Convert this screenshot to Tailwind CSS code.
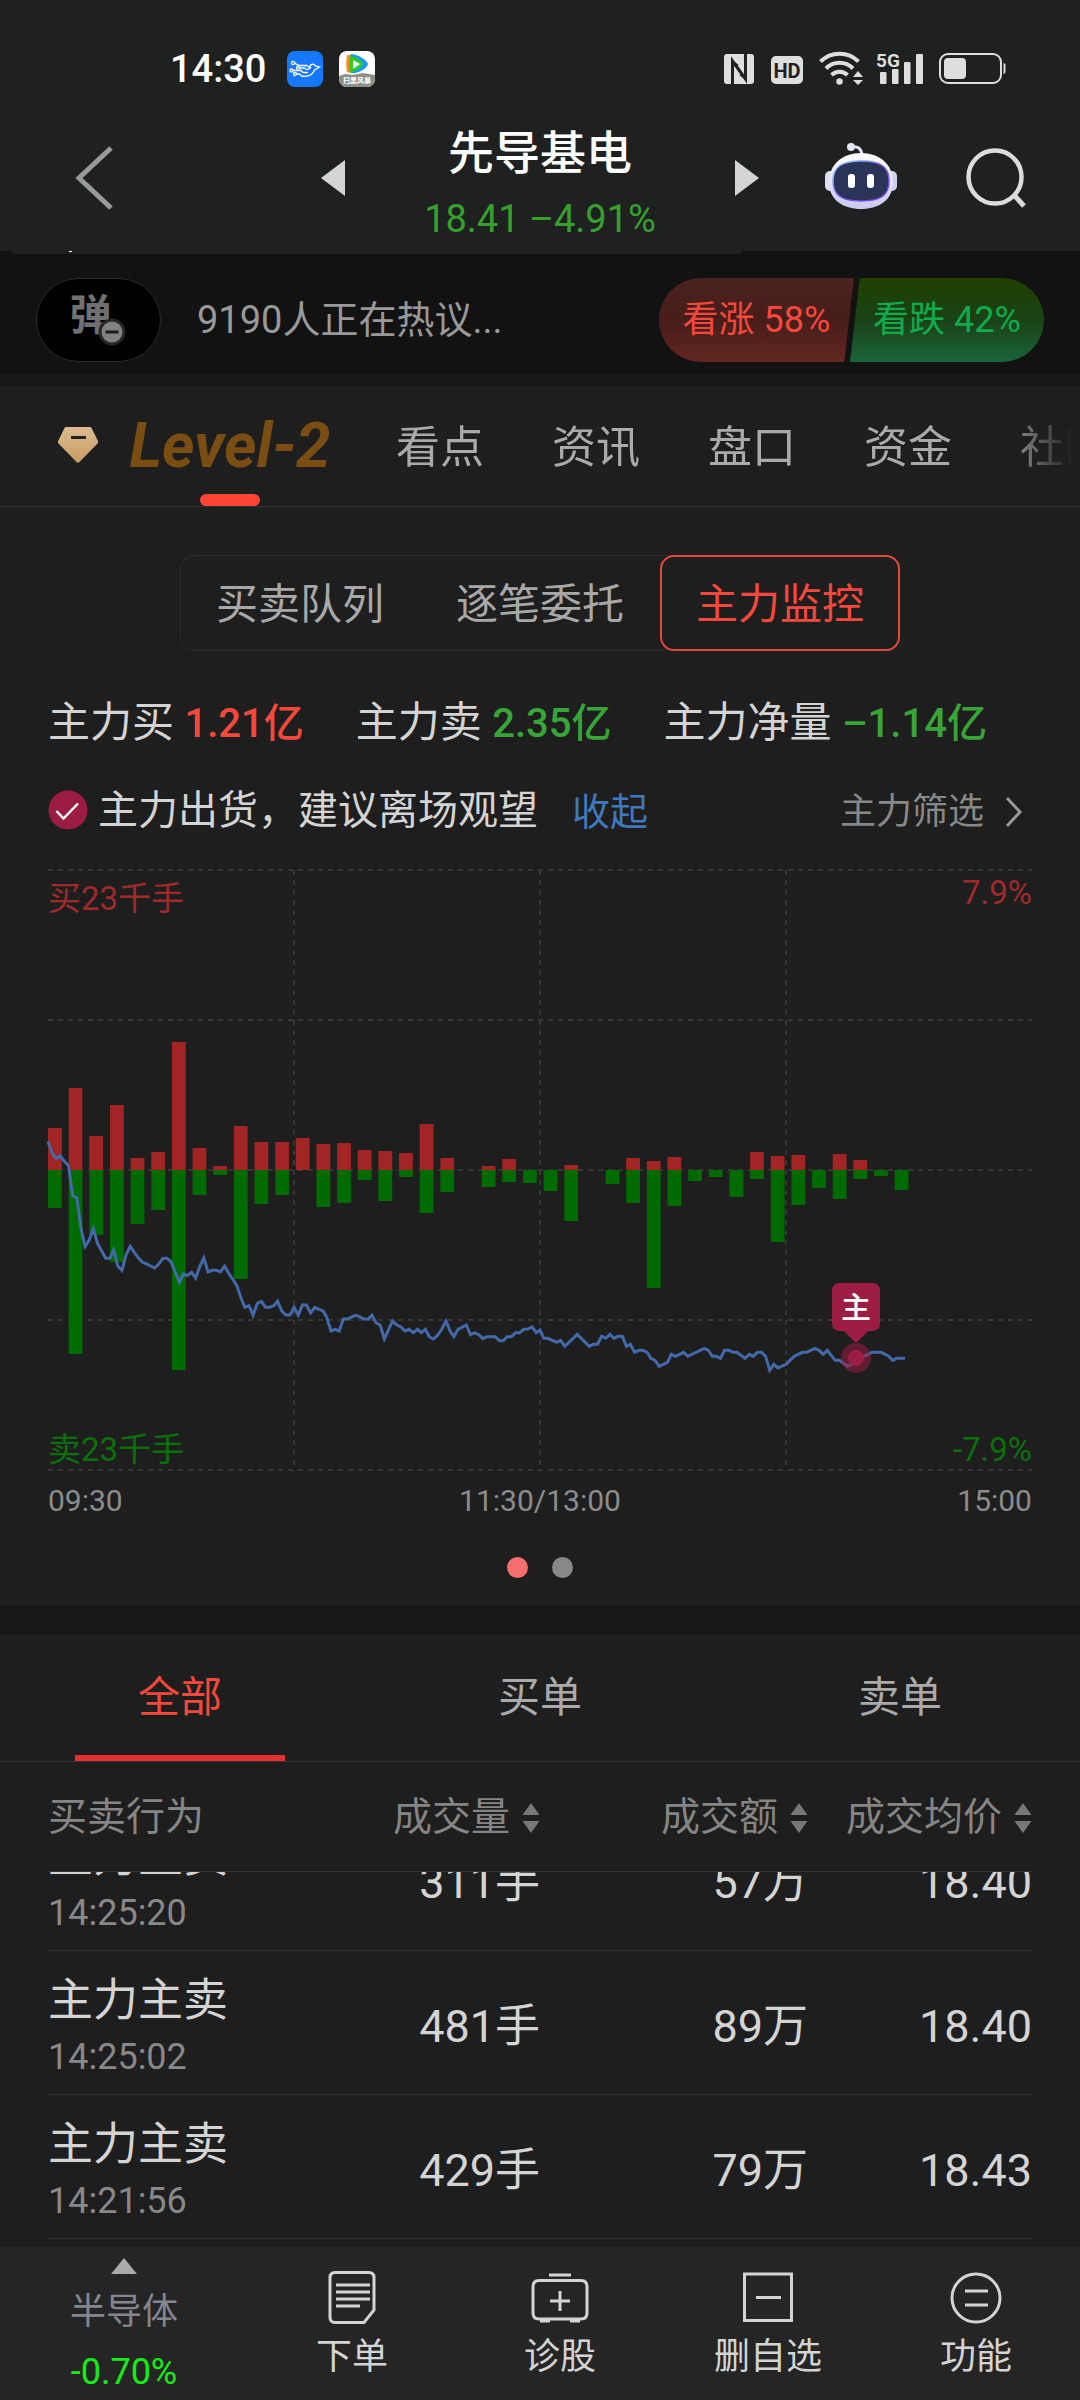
<!DOCTYPE html>
<html lang="zh-CN">
<head>
<meta charset="utf-8">
<meta name="viewport" content="width=device-width, initial-scale=1">
<title>先导基电</title>
<script src="https://cdn.jsdelivr.net/npm/@tailwindcss/browser@4"></script>
</head>
<body class="min-h-screen bg-[#1e1e1e] font-['Roboto','Noto_Sans_CJK_SC',sans-serif] leading-none text-[#d4d4d4]">
<div class="flex min-h-screen flex-col">

  <!-- Status bar and title -->
  <header class="flex h-[251px] flex-col bg-[#1f2121]">
    <div class="mt-11 flex h-[50px] items-center justify-between pr-[74px] pl-[170px]">
      <div class="flex items-center">
        <span class="w-[117px] text-[38px] font-medium text-white">14:30</span>
        <svg class="size-9" viewBox="0 0 36 36"><rect width="36" height="36" rx="8" fill="#1677ff"/><g fill="none" stroke="#fff" stroke-width="1.3"><circle cx="6" cy="12" r="1.6"/><circle cx="4.500" cy="19.500" r="1.500"/><circle cx="8" cy="23" r="1.500"/><circle cx="11" cy="17" r="1.500"/><path d="M7.600 12l4 2.500h8l3 2M12.500 17h6M6 19.500h8l2 2h5M9.500 23h3l2 2c6 1 11-1 13-6l5-3-4-1c-2-3-5-2-6 1M18 18c2 1 5 0 6-2"/></g></svg>
        <svg class="ml-4 size-9" viewBox="0 0 36 36"><defs><clipPath id="appClip"><rect width="36" height="36" rx="8"/></clipPath></defs><g clip-path="url(#appClip)"><rect width="36" height="36" fill="#fff"/><path d="M0 25l6-2 8 1 10-2 12 2v12H0z" fill="#8c8f86"/><path d="M8 4c-1 5-1 13 0 17l4 1V4z" fill="#ff8a1f"/><path d="M12 3c6 0 16 6 17 10-1 5-11 10-17 9-2-4-2-14 0-19z" fill="#1b9af7"/><path d="M11 5c5 0 12 5 13 8-1 3-8 8-13 8-1-4-1-12 0-16z" fill="#2ecc1e"/><path d="M14 9l7 4-7 5z" fill="#fff"/><text x="18" y="32" text-anchor="middle" font-size="7" font-weight="700" fill="#fff">扫黑风暴</text></g></svg>
      </div>
      <svg class="h-[36px] w-[282px]" viewBox="0 0 282 36" fill="#dedede">
        <rect y="3" width="30" height="30" rx="3"/>
        <path d="M8.500 33V10l13 18V3M8.500 11l5 4M21.500 27l-5-4" fill="none" stroke="#1f2121" stroke-width="3"/>
        <rect x="47" y="5" width="32" height="28" rx="5"/>
        <text x="63" y="26.500" text-anchor="middle" font-size="20" font-weight="700" fill="#1f2121">HD</text>
        <g fill="none" stroke="#dedede" stroke-width="4"><path d="M96.500 10.500a27 27 0 0 1 38 0M102 17.500a19 19 0 0 1 27 0M107.500 24a11.500 11.500 0 0 1 16 0"/></g>
        <circle cx="115.500" cy="30.500" r="3.200"/>
        <path d="M134 20l5 6h-10zM134 34l5-5h-10z"/>
        <text x="152" y="16" font-size="19" font-weight="700">5G</text>
        <rect x="156" y="21" width="6.500" height="12" rx="1"/><rect x="168" y="18" width="6.500" height="15" rx="1"/><rect x="180" y="11" width="6.500" height="22" rx="1"/><rect x="192" y="3" width="7" height="30" rx="1"/>
        <rect x="216" y="3" width="61" height="29" rx="8" fill="none" stroke="#dedede" stroke-width="2"/>
        <rect x="220" y="7" width="22" height="21" rx="4"/><path d="M279.500 12q2 .5 2 2v7q0 1.500-2 2z"/>
      </svg>
    </div>
    <div class="mt-2.5 grid h-[147px] grid-cols-[1fr_438px_1fr] items-center">
      <button class="pl-[74px]" aria-label="返回"><svg class="h-[66px] w-10" viewBox="0 0 40 66"><path d="M37 3L5 33l32 30" fill="none" stroke="#999" stroke-width="5"/></svg></button>
      <div class="flex items-center justify-between">
        <button aria-label="上一只"><svg class="h-9 w-6" viewBox="0 0 24 36"><path d="M24 0v36L0 18z" fill="#d4d4d4"/></svg></button>
        <div class="flex flex-col items-center gap-6 pt-3">
          <h1 class="text-[46px] font-medium text-white">先导基电</h1>
          <p class="text-[38px] text-[#37a02d]">18.41 –4.91%</p>
        </div>
        <button aria-label="下一只"><svg class="h-9 w-6" viewBox="0 0 24 36"><path d="M0 0v36l24-18z" fill="#d4d4d4"/></svg></button>
      </div>
      <div class="flex items-center justify-between pr-[54px] pl-[66px]">
        <button class="pb-1" aria-label="智能助手">
          <svg class="h-[66px] w-[72px]" viewBox="0 0 72 66">
            <defs><linearGradient id="head" x1="0" y1="0" x2="0" y2="1"><stop offset="0" stop-color="#fff"/><stop offset="1" stop-color="#c9c8f0"/></linearGradient><linearGradient id="rim" x1="0" y1="0" x2="1" y2="1"><stop offset="0" stop-color="#8fe6ff"/><stop offset=".5" stop-color="#7a5af0"/><stop offset="1" stop-color="#7b3fe0"/></linearGradient></defs>
            <path d="M26 4q10-2 11 8" fill="none" stroke="#e6e4fa" stroke-width="3"/><circle cx="26" cy="4" r="4" fill="#e6e6fb"/>
            <rect y="28" width="12" height="20" rx="5" fill="#dfe0f6"/><rect x="60" y="28" width="12" height="20" rx="5" fill="#cfcff0"/>
            <path d="M36 10c18 0 32 11 32 29S54 66 36 66 4 57 4 39 18 10 36 10z" fill="url(#head)"/>
            <path d="M36 18c20 0 28 6 28 20S56 58 36 58 8 52 8 38s8-20 28-20z" fill="#2a3358" stroke="url(#rim)" stroke-width="1.500"/>
            <rect x="23" y="31" width="7" height="14" rx="3" fill="#fff"/><rect x="42" y="31" width="7" height="14" rx="3" fill="#fff"/>
          </svg>
        </button>
        <button aria-label="搜索"><svg class="size-[60px]" viewBox="0 0 60 60"><circle cx="29" cy="29" r="26.500" fill="none" stroke="#dcdcdc" stroke-width="4.500"/><path d="M48 47l10 11" stroke="#dcdcdc" stroke-width="5"/></svg></button>
      </div>
    </div>
  </header>
  <div class="flex h-[3px] bg-[#121212] px-3"><div class="w-[69%] bg-[#1f2121] pl-[57px]"><div class="h-px w-[3px] bg-white"></div></div></div>

  <!-- Discussion bar -->
  <section class="flex h-[120px] items-center bg-[#121212] px-9 pt-3">
    <button class="relative flex h-[84px] w-[125px] items-center justify-center rounded-full border border-[#2a2a2a] bg-black pr-4 pb-2 text-[42px] font-bold text-[#707070]" aria-label="弹幕">弹
      <svg class="absolute top-[39px] left-[61px] size-7" viewBox="0 0 28 28"><circle cx="14" cy="14" r="12" fill="#828282" stroke="#262626" stroke-width="3"/><path d="M7.500 14h13" stroke="#1c1c1c" stroke-width="3"/></svg>
    </button>
    <a href="#" class="ml-9 text-[38px] text-[#999]">9190人正在热议...</a>
    <div class="ml-auto flex h-[84px] overflow-hidden rounded-full text-[36px]">
      <button class="w-[195px] bg-linear-to-b from-[#4a221f] via-[#471d1a] to-[#632620] text-[#f4483c] [clip-path:polygon(0_0,100%_0,95%_100%,0_100%)]">看涨 58%</button>
      <button class="-ml-1 w-[194px] bg-linear-to-b from-[#204000] via-[#1a4216] to-[#19653a] text-[#10ab4c] [clip-path:polygon(5%_0,100%_0,100%_100%,0_100%)]">看跌 42%</button>
    </div>
  </section>
  <div class="h-3 bg-[#181818]"></div>

  <!-- Section tabs -->
  <nav class="flex h-[121px] items-center border-b border-[#333] pl-[58px] text-[44px] whitespace-nowrap text-[#aaa]">
    <svg class="mb-0.5 h-9 w-10 shrink-0" viewBox="0 0 40 36"><defs><linearGradient id="gem" x1="0" y1="0" x2="0" y2="1"><stop offset="0" stop-color="#dcbc92"/><stop offset="1" stop-color="#c89c62"/></linearGradient></defs><path d="M8 0h24q1 0 1.500 1L40 14q.5 1.500-.5 2.500L21.500 35q-1.500 1.500-3 0L.5 16.500q-1-1-.3-2.500L6.500 1Q7 0 8 0z" fill="url(#gem)"/><path d="M13 10.500h15" stroke="#222" stroke-width="3"/></svg>
    <a href="#" aria-current="page" class="relative ml-8 flex h-full w-[200px] shrink-0 items-center justify-center text-[62px] font-bold text-[#7a4d12] italic">Level-2<span class="absolute bottom-0 left-1/2 h-3 w-[60px] -translate-x-1/2 rounded-md bg-[#ff4433]"></span></a>
    <div class="ml-[66px] flex h-full min-w-0 flex-1 items-center gap-[68px] overflow-x-auto pt-1 [mask-image:linear-gradient(to_right,black_88%,transparent_99%)] [scrollbar-width:none]"><a href="#">看点</a><a href="#">资讯</a><a href="#">盘口</a><a href="#">资金</a><a href="#">社区</a></div>
  </nav>

  <!-- Main force monitor -->
  <section class="flex flex-col px-12">
    <div class="mt-12 flex h-24 self-center rounded-[14px] text-[42px] text-[#a8a8a8] ring-1 ring-[#2a2a2a] ring-inset">
      <button class="w-60 pt-1">买卖队列</button><button class="w-60 pt-1">逐笔委托</button><button class="w-60 rounded-[14px] border-2 border-[#e04a3c] pt-1 text-[#f4483c]">主力监控</button>
    </div>
    <div class="mt-12 flex h-12 items-center gap-[52px] text-[42px] whitespace-nowrap">
      <p>主力买 <span class="text-[40px] font-medium text-[#f4483c]">1.21亿</span></p>
      <p>主力卖 <span class="text-[40px] font-medium text-[#37a537]">2.35亿</span></p>
      <p>主力净量 <span class="text-[40px] font-medium text-[#37a537]">–1.14亿</span></p>
    </div>
    <div class="mt-[38px] flex h-[50px] items-center">
      <svg class="size-10" viewBox="0 0 40 40"><circle cx="20" cy="20" r="19.500" fill="#9b1d43"/><path d="M8.500 21l7 7.500L30 13.500" fill="none" stroke="#fff" stroke-width="2.500"/></svg>
      <p class="ml-2.5 pt-0.5 text-[40px]">主力出货，建议离场观望</p>
      <button class="ml-[34px] pt-1 text-[38px] text-[#4078bd]">收起</button>
      <button class="ml-auto flex items-center gap-5 pt-1 pr-2 text-[36px] text-[#888]">主力筛选<svg class="h-8 w-5" viewBox="0 0 20 32"><path d="M3 2l13 14L3 30" fill="none" stroke="#999" stroke-width="3"/></svg></button>
    </div>
    <svg class="mt-[35px] w-full overflow-visible" viewBox="0 0 984 600" role="img" aria-label="主力买卖走势图">
      <path d="M0 0h984M0 150h984M0 300h984M0 450h984M0 600h984M246 0v600M492 0v600M738 0v600" fill="none" stroke="#353535" stroke-width="2" stroke-dasharray="5 5"/>
      <g id="bars"></g>
      <g font-size="33"><g fill="#a02a2a"><text x="0" y="40">买23千手</text><text x="984" y="34" text-anchor="end">7.9%</text></g><g fill="#0b700b"><text x="0" y="591">卖23千手</text><text x="984" y="591" text-anchor="end">-7.9%</text></g></g>
      <polyline transform="translate(-48 260) scale(.3444 .3333)" vector-effect="non-scaling-stroke" fill="none" stroke="#4369a8" stroke-width="3" points="139,34 151,68 163,86 175,78 187,94 199,107 211,197 223,203 235,295 247,350 259,330 271,296 283,340 295,362 307,385 319,385 330,360 342,408 354,421 366,375 378,349 390,367 402,384 414,397 426,402 437,408 449,414 461,402 473,385 485,385 497,396 509,427 521,456 532,432 544,437 556,427 568,444 580,410 592,384 604,426 616,421 628,421 640,426 652,408 664,430 676,448 688,468 700,505 711,532 723,527 735,556 747,520 759,514 771,532 783,532 795,527 806,514 818,543 830,555 842,555 854,532 866,555 878,525 890,525 902,549 914,532 926,538 938,543 948,560 961,603 973,598 985,603 997,567 1009,567 1021,561 1033,556 1045,561 1057,567 1069,567 1080,556 1092,579 1104,585 1116,627 1128,600 1140,573 1152,585 1164,591 1176,603 1188,598 1200,608 1212,598 1223,608 1235,598 1247,621 1259,627 1271,615 1283,597 1295,573 1307,603 1318,620 1330,598 1354,585 1366,614 1378,608 1390,614 1402,626 1414,620 1438,620 1450,632 1461,632 1473,620 1485,620 1497,608 1509,608 1521,598 1533,597 1545,591 1557,608 1568,600 1579,625 1591,625 1616,637 1628,631 1640,649 1676,613 1711,649 1723,643 1735,643 1747,619 1759,625 1771,613 1783,625 1795,619 1807,619 1819,649 1830,643 1843,667 1855,661 1867,661 1879,667 1890,685 1902,691 1914,709 1938,697 1949,673 1961,679 1985,667 1997,679 2045,655 2057,661 2068,679 2080,679 2092,685 2104,661 2116,661 2128,667 2140,667 2163,685 2176,673 2187,679 2199,667 2211,667 2223,679 2235,721 2247,703 2259,714 2282,703 2306,679 2330,667 2342,667 2366,655 2378,661 2390,673 2402,661 2425,691 2437,691 2461,709 2473,703 2485,690 2508,679 2532,667 2558,667 2580,678 2592,691 2604,685 2628,685"/>
      <g fill="#9b1d43"><circle cx="808" cy="488" r="15" opacity=".55"/><circle cx="808" cy="488" r="8"/><path d="M792 413h32q8 0 8 8v32q0 8-8 8h-4l-12 12-12-12h-4q-8 0-8-8v-32q0-8 8-8z"/></g>
      <text x="808" y="448" text-anchor="middle" font-size="30" font-weight="500" fill="#fff">主</text>
    </svg>
    <div class="mt-4 flex justify-between text-[30px] text-[#8c8c8c]"><span>09:30</span><span>11:30/13:00</span><span>15:00</span></div>
    <div class="mt-[41px] mb-[27px] flex justify-center gap-6"><span class="size-[21px] rounded-full bg-[#f56f6f]"></span><span class="size-[21px] rounded-full bg-[#888]"></span></div>
  </section>
  <div class="h-[30px] bg-[#171717]"></div>

  <!-- Order list -->
  <div class="grid h-[127px] grid-cols-3 border-b border-[#333] text-[42px] text-[#aaa]">
    <button class="relative text-[#f4483c]">全部<span class="absolute bottom-0 left-1/2 h-[6px] w-[210px] -translate-x-1/2 bg-[#e33030]"></span></button>
    <button>买单</button><button>卖单</button>
  </div>
  <div class="flex h-[485px] flex-col-reverse overflow-y-auto px-12 pb-2 [scrollbar-width:none]">
    <table class="w-full shrink-0 table-fixed border-separate border-spacing-0 text-right text-[45px]">
      <colgroup><col class="w-1/4"><col class="w-1/4"><col><col class="w-[224px]"></colgroup>
      <thead class="text-[39px] whitespace-nowrap text-[#858585] [&_th]:sticky [&_th]:top-0 [&_th]:h-[110px] [&_th]:border-b [&_th]:border-[#333] [&_th]:bg-[#1e1e1e] [&_th]:pt-0.5 [&_th]:font-normal">
        <tr>
          <th class="text-left">买卖行为</th>
          <th><button class="inline-flex items-center gap-3">成交量<svg class="h-8 w-[18px]" viewBox="0 0 18 32" fill="#777"><path d="M9 1l8.500 12H.5zM9 31L.5 19h17z"/></svg></button></th>
          <th><button class="inline-flex items-center gap-3">成交额<svg class="h-8 w-[18px]" viewBox="0 0 18 32" fill="#777"><path d="M9 1l8.500 12H.5zM9 31L.5 19h17z"/></svg></button></th>
          <th><button class="inline-flex items-center gap-3">成交均价<svg class="h-8 w-[18px]" viewBox="0 0 18 32" fill="#777"><path d="M9 1l8.500 12H.5zM9 31L.5 19h17z"/></svg></button></th>
        </tr>
      </thead>
      <tbody class="[&_td]:h-36 [&_td]:border-b [&_td]:border-[#333] [&_td]:pt-2">
        <tr><td class="text-left"><p>主力主卖</p><p class="mt-4 text-[36px] text-[#888]">14:25:20</p></td><td>311手</td><td>57万</td><td>18.40</td></tr>
        <tr><td class="text-left"><p>主力主卖</p><p class="mt-4 text-[36px] text-[#888]">14:25:02</p></td><td>481手</td><td>89万</td><td>18.40</td></tr>
        <tr><td class="text-left"><p>主力主卖</p><p class="mt-4 text-[36px] text-[#888]">14:21:56</p></td><td>429手</td><td>79万</td><td>18.43</td></tr>
      </tbody>
    </table>
  </div>

  <!-- Bottom actions -->
  <footer class="grid h-[153px] grid-cols-[248fr_208fr_208fr_208fr_208fr] bg-[#252525] text-[36px]">
    <button class="flex flex-col items-center pt-[11px] text-[#85858f]"><svg class="h-4 w-[26px]" viewBox="0 0 26 16"><path d="M13 0l13 16H0z" fill="#aaa"/></svg><span class="mt-5">半导体</span><span class="mt-6 text-[#14ee14]">-0.70%</span></button>
    <button class="flex flex-col items-center gap-3.5 pt-[22px]"><svg class="h-14 w-[60px]" viewBox="0 0 60 56" fill="none" stroke="#d4d4d4" stroke-width="3"><path d="M13 3.500h34q5 0 5 5V41L42 53.500H13q-5 0-5-5v-40q0-5 5-5zM14 16h34M14 23h34M14 30h34M14 37h24"/></svg>下单</button>
    <button class="flex flex-col items-center gap-3.5 pt-[22px]"><svg class="h-14 w-[60px]" viewBox="0 0 60 56" fill="none" stroke="#d4d4d4" stroke-width="3"><path d="M19 6h22M9 11.500h42q6 0 6 6V44q0 6-6 6H9q-6 0-6-6V17.500q0-6 6-6zM30 22v20M20 32h20M10 52h10M40 52h10"/></svg>诊股</button>
    <button class="flex flex-col items-center gap-3.5 pt-[22px]"><svg class="h-14 w-[60px]" viewBox="0 0 60 56" fill="none" stroke="#d4d4d4" stroke-width="3"><path d="M6.500 5h47v46.500h-47zM18 28.500h25"/></svg>删自选</button>
    <button class="flex flex-col items-center gap-3.5 pt-[22px]"><svg class="h-14 w-[60px]" viewBox="0 0 60 56" fill="none" stroke="#d4d4d4" stroke-width="3"><circle cx="30" cy="29" r="24"/><path d="M19 22h23M19 36h23"/></svg>功能</button>
  </footer>
</div>
<script>
  // Bar heights in chart units: buys rise above the zero line, sells hang below it.
  const buys = [42,82,34,65,12,18,128,22,4,44,28,28,32,26,27,20,19,17,46,12,0,4,11,0,0,5,0,0,12,9,13,0,0,0,18,14,15,0,16,10,0,0];
  const sells = [38,184,65,92,54,40,200,25,5,109,34,25,0,37,33,10,31,7,43,22,0,17,12,13,21,51,0,14,33,118,36,11,7,27,9,72,35,18,29,9,6,20];
  const bar = (i, y, h, fill) => h ? `<rect x="${(i * 20.65).toFixed(2)}" y="${y}" width="13.8" height="${h}" fill="${fill}"/>` : '';
  document.getElementById('bars').innerHTML =
    buys.map((h, i) => bar(i, 300 - h, h, '#a32424')).join('') + sells.map((h, i) => bar(i, 300, h, '#006b00')).join('');
</script>
</body>
</html>
